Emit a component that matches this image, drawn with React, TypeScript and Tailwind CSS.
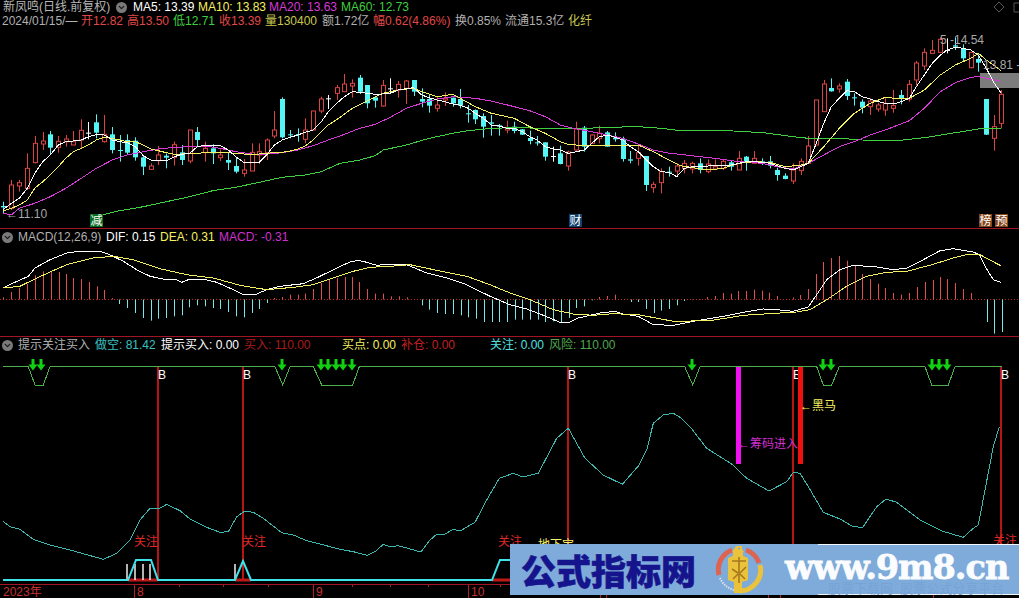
import { ChevronDown } from 'lucide-react'

type Zoom = number[][]

// chart points were read off 3x crops, so every list carries its crop offset
function pts(list: Zoom, ox: number, oy: number): string {
  return list.map(([x, y]) => `${(ox + x / 3).toFixed(1)},${(oy + y / 3).toFixed(1)}`).join(' ')
}

const RED = '#dc4444'
const CYAN = '#55f5f5'

// x, wick top, body top, body bottom, wick bottom, colour
type Candle = [number, number, number, number, number, string]

const CANDLES_A: Candle[] = [
  [10, 605, 618, 622, 640, 'c'], [34, 540, 555, 625, 630, 'r'], [58, 540, 548, 558, 575, 'r'], [82, 460, 505, 565, 570, 'r'],
  [104, 408, 430, 488, 490, 'r'], [128, 396, 423, 432, 450, 'r'], [151, 393, 403, 443, 465, 'c'], [175, 408, 424, 442, 458, 'r'],
  [197, 405, 417, 425, 440, 'r'], [220, 393, 425, 435, 435, 'r'], [244, 358, 391, 420, 447, 'r'], [265, 366, 398, 400, 418, 'w'],
  [289, 343, 367, 398, 415, 'c'], [313, 345, 403, 425, 428, 'r'], [337, 381, 403, 450, 460, 'c'], [359, 405, 450, 452, 485, 'c'],
  [382, 403, 420, 458, 465, 'c'], [406, 412, 422, 472, 482, 'c'], [430, 465, 472, 500, 525, 'c'], [452, 490, 498, 508, 510, 'r'],
  [475, 438, 465, 482, 495, 'r'], [499, 460, 467, 473, 505, 'c'], [523, 425, 434, 472, 497, 'r'], [545, 435, 457, 480, 495, 'c'],
  [569, 390, 390, 483, 490, 'r'], [592, 381, 396, 420, 438, 'c'], [616, 425, 445, 458, 485, 'r'], [638, 433, 445, 460, 492, 'c'],
  [661, 448, 465, 473, 483, 'r'], [685, 458, 480, 488, 510, 'c'], [707, 472, 498, 515, 520, 'c'], [731, 477, 510, 520, 530, 'r'],
  [755, 430, 457, 513, 513, 'r'], [778, 430, 455, 465, 492, 'r'], [800, 415, 420, 458, 480, 'r'], [823, 333, 390, 408, 415, 'r'],
  [847, 292, 297, 412, 415, 'c'], [871, 390, 403, 405, 415, 'c'], [893, 385, 402, 404, 425, 'c'], [916, 355, 390, 418, 430, 'r'],
  [940, 332, 333, 390, 390, 'r'], [964, 290, 297, 333, 340, 'r'], [985, 285, 295, 297, 327, 'w'], [1010, 255, 263, 280, 300, 'r'],
]

const CANDLES_B: Candle[] = [
  [13, 222, 252, 275, 275, 'r'], [37, 238, 250, 258, 293, 'r'], [59, 225, 233, 275, 282, 'c'], [82, 255, 255, 310, 325, 'c'],
  [106, 292, 292, 302, 323, 'c'], [128, 240, 256, 318, 320, 'r'], [151, 235, 265, 267, 280, 'w'], [175, 243, 253, 270, 293, 'r'],
  [199, 240, 243, 265, 312, 'r'], [221, 240, 240, 275, 288, 'c'], [245, 265, 297, 305, 322, 'c'], [268, 283, 297, 317, 338, 'c'],
  [292, 290, 315, 325, 335, 'r'], [315, 277, 295, 300, 318, 'r'], [338, 293, 293, 310, 320, 'c'], [361, 267, 297, 317, 325, 'c'],
  [385, 315, 340, 342, 368, 'c'], [406, 328, 330, 358, 372, 'c'], [430, 340, 348, 380, 413, 'c'], [454, 345, 367, 371, 407, 'c'],
  [478, 372, 376, 380, 407, 'c'], [500, 362, 385, 390, 400, 'r'], [523, 365, 380, 393, 400, 'c'], [547, 387, 388, 404, 405, 'c'],
  [569, 392, 414, 423, 433, 'c'], [591, 408, 427, 429, 437, 'c'], [616, 427, 427, 470, 482, 'c'], [640, 440, 468, 470, 485, 'w'],
  [661, 437, 460, 492, 493, 'c'], [685, 452, 456, 498, 512, 'r'], [709, 365, 387, 450, 452, 'r'], [733, 378, 383, 440, 455, 'c'],
  [755, 403, 405, 430, 432, 'r'], [778, 377, 400, 416, 430, 'r'], [802, 393, 397, 440, 440, 'c'], [826, 397, 413, 418, 425, 'c'],
  [848, 410, 418, 477, 485, 'c'], [871, 453, 478, 482, 490, 'c'], [895, 433, 458, 475, 497, 'r'], [919, 468, 468, 555, 573, 'c'],
  [940, 545, 553, 563, 578, 'r'], [964, 505, 515, 548, 580, 'r'], [987, 500, 515, 518, 530, 'c'], [1010, 490, 498, 513, 525, 'r'],
]

const CANDLES_C: Candle[] = [
  [13, 480, 490, 505, 520, 'r'], [37, 485, 490, 507, 520, 'r'], [61, 475, 490, 510, 520, 'c'], [83, 478, 492, 515, 520, 'r'],
  [106, 478, 500, 507, 510, 'r'], [130, 480, 484, 505, 510, 'r'], [154, 480, 487, 500, 512, 'c'], [176, 453, 475, 510, 510, 'r'],
  [199, 468, 470, 485, 512, 'c'], [223, 453, 475, 490, 490, 'r'], [247, 475, 484, 490, 495, 'c'], [269, 468, 484, 497, 505, 'c'],
  [292, 503, 510, 525, 542, 'c'], [316, 520, 527, 537, 538, 'c'], [340, 490, 510, 543, 552, 'r'], [362, 475, 484, 512, 525, 'r'],
  [385, 408, 438, 490, 490, 'r'], [409, 300, 300, 435, 435, 'r'], [431, 240, 252, 335, 335, 'r'], [454, 235, 264, 274, 275, 'c'],
  [478, 250, 258, 267, 278, 'r'], [501, 237, 245, 288, 300, 'c'], [523, 280, 292, 294, 317, 'c'], [547, 298, 305, 323, 340, 'c'],
  [571, 295, 303, 320, 345, 'r'], [595, 308, 315, 327, 335, 'r'], [616, 295, 310, 330, 347, 'r'], [640, 270, 317, 325, 338, 'r'],
  [664, 270, 285, 295, 313, 'c'], [688, 240, 253, 297, 305, 'r'], [709, 183, 189, 240, 257, 'r'], [733, 145, 157, 198, 210, 'r'],
  [757, 120, 151, 160, 160, 'r'], [781, 112, 118, 157, 157, 'r'], [802, 115, 150, 152, 160, 'w'], [826, 112, 136, 140, 150, 'c'],
  [850, 133, 145, 175, 183, 'c'], [872, 157, 157, 203, 205, 'r'], [895, 163, 177, 188, 215, 'c'], [919, 297, 297, 404, 405, 'c'],
  [943, 345, 380, 415, 452, 'r'], [964, 270, 283, 370, 385, 'r'],
]

const MA5 = [
  pts([[10, 628], [34, 610], [58, 595], [82, 565], [104, 520], [128, 485], [151, 465], [175, 435], [197, 425], [220, 423], [244, 420], [265, 410], [289, 404], [313, 405], [337, 420], [359, 425], [382, 428], [406, 440], [430, 467], [452, 480], [475, 483], [499, 482], [523, 470], [545, 463], [569, 460], [592, 440], [616, 435], [638, 435], [661, 437], [685, 450], [707, 470], [731, 487], [755, 488], [778, 487], [800, 465], [823, 435], [847, 420], [871, 412], [893, 405], [916, 397], [940, 390], [964, 365], [985, 335], [1010, 310]], 0, 0),
  pts([[13, 290], [37, 275], [59, 277], [82, 280], [106, 283], [128, 282], [151, 280], [175, 270], [199, 266], [221, 263], [245, 285], [268, 293], [292, 300], [315, 305], [338, 312], [361, 316], [385, 325], [406, 340], [430, 355], [454, 375], [478, 378], [500, 385], [523, 385], [547, 395], [569, 410], [591, 420], [616, 440], [640, 447], [661, 450], [685, 460], [709, 455], [733, 450], [755, 430], [778, 410], [802, 405], [826, 412], [848, 420], [871, 440], [895, 455], [919, 480], [940, 500], [964, 515], [987, 517], [1010, 530]], 340, 0),
  pts([[13, 505], [37, 500], [61, 498], [83, 498], [106, 497], [130, 497], [154, 495], [176, 490], [199, 485], [223, 485], [247, 487], [269, 490], [292, 497], [316, 505], [340, 510], [362, 500], [385, 490], [409, 430], [431, 370], [454, 320], [478, 295], [501, 272], [523, 275], [547, 290], [571, 297], [595, 305], [616, 310], [640, 312], [664, 305], [688, 295], [709, 260], [733, 225], [757, 190], [781, 165], [802, 150], [826, 142], [850, 145], [872, 150], [895, 165], [919, 205], [943, 250], [964, 280]], 680, 0),
].join(' ')

const MA10 = [
  pts([[10, 632], [34, 625], [58, 615], [82, 600], [104, 565], [128, 545], [151, 525], [175, 500], [197, 475], [220, 455], [244, 445], [265, 435], [289, 420], [313, 412], [337, 415], [359, 420], [382, 425], [406, 425], [430, 435], [452, 447], [475, 452], [499, 458], [523, 463], [545, 462], [569, 460], [592, 460], [616, 458], [638, 457], [661, 456], [685, 458], [707, 460], [731, 462], [755, 462], [778, 462], [800, 460], [823, 458], [847, 457], [871, 453], [893, 447], [916, 438], [940, 420], [964, 395], [985, 375], [1019, 353]], 0, 0),
  pts([[37, 325], [82, 303], [128, 280], [175, 270], [221, 265], [245, 275], [292, 290], [338, 283], [361, 295], [406, 320], [454, 340], [523, 355], [569, 380], [616, 400], [661, 425], [685, 433], [733, 437], [778, 435], [848, 435], [895, 435], [940, 455], [987, 480]], 340, 0),
  pts([[0, 497], [40, 503], [83, 510], [130, 505], [176, 490], [223, 485], [269, 487], [316, 500], [362, 495], [385, 490], [431, 440], [478, 385], [523, 340], [571, 310], [616, 292], [664, 297], [688, 295], [733, 270], [781, 225], [826, 195], [872, 175], [895, 160], [919, 180], [964, 212]], 680, 0),
].join(' ')

const MA20 = [
  pts([[10, 640], [34, 645], [58, 625], [104, 610], [151, 590], [197, 565], [244, 535], [289, 505], [337, 480], [382, 465], [430, 455], [475, 447], [523, 442], [569, 440], [616, 438], [661, 445], [707, 455], [755, 462], [800, 462], [847, 458], [893, 450], [940, 437], [985, 420]], 0, 0),
  pts([[0, 408], [59, 385], [106, 373], [151, 352], [199, 325], [245, 310], [292, 297], [338, 290], [406, 295], [454, 303], [523, 320], [569, 332], [616, 350], [661, 375], [700, 385], [755, 395], [802, 405], [848, 415], [895, 432], [940, 450], [987, 460]], 340, 0),
  pts([[0, 463], [60, 470], [106, 475], [154, 482], [199, 487], [247, 490], [292, 500], [340, 507], [385, 490], [431, 465], [478, 440], [523, 425], [571, 405], [616, 390], [688, 362], [733, 325], [781, 275], [826, 248], [872, 232], [895, 230], [919, 235], [960, 243]], 680, 0),
].join(' ')

const MA60 = [
  pts([[305, 645], [359, 632], [430, 620], [499, 605], [569, 590], [638, 572], [707, 562], [778, 547], [847, 532], [916, 525], [964, 515]], 0, 0),
  pts([[0, 490], [59, 480], [106, 467], [130, 450], [199, 435], [268, 415], [338, 400], [385, 392], [454, 385], [523, 383], [616, 385], [700, 387], [802, 382], [895, 380], [964, 385]], 340, 0),
  pts([[0, 392], [80, 392], [160, 393], [250, 398], [340, 410], [385, 415], [478, 415], [547, 420], [640, 423], [733, 413], [826, 398], [895, 387], [964, 384]], 680, 0),
].join(' ')

const MACD_BARS: [number, number][] = [
  [10, 208], [34, 192], [57, 180], [81, 168], [104, 142], [128, 130], [152, 132], [176, 132], [197, 138], [220, 150], [244, 153], [266, 162], [290, 175], [313, 186], [337, 210],
  [358, 228], [382, 240], [406, 255], [430, 270], [452, 278], [475, 272], [499, 270], [523, 265], [545, 262], [568, 238], [592, 232], [616, 235], [638, 240], [661, 243], [685, 252], [707, 265], [731, 268], [755, 255], [778, 243], [800, 225],
  [823, 210], [847, 207], [871, 200], [893, 200], [916, 197], [940, 183], [964, 165], [986, 155], [1010, 150], [1034, 147], [1057, 147], [1078, 162], [1102, 183], [1125, 197], [1148, 197], [1172, 205], [1196, 205], [1220, 208],
  [1265, 232], [1288, 245], [1312, 255], [1335, 258], [1358, 258], [1382, 262], [1405, 268], [1428, 272], [1451, 282], [1475, 282], [1498, 282], [1522, 282],
  [1544, 275], [1567, 275], [1589, 275], [1613, 275], [1636, 282], [1660, 280], [1682, 285], [1706, 270], [1729, 240], [1753, 235], [1775, 217],
  [1798, 207], [1822, 204], [1846, 200],
  [1892, 222], [1915, 222], [1939, 243], [1961, 255], [1984, 248], [2008, 243], [2030, 232], [2053, 219],
  [2077, 213], [2101, 213], [2122, 207], [2146, 204], [2170, 195], [2194, 197], [2215, 189], [2239, 189], [2263, 185], [2287, 188], [2308, 194], [2332, 204], [2380, 208], [2401, 201], [2425, 183], [2449, 138], [2470, 102], [2494, 90], [2518, 84], [2542, 98], [2564, 113], [2587, 138], [2611, 153], [2635, 167], [2655, 180], [2680, 195], [2704, 200], [2728, 195], [2750, 177], [2774, 162], [2798, 156], [2821, 147], [2842, 153], [2866, 165], [2890, 183], [2912, 195],
  [2960, 282], [2983, 317], [3005, 312],
]

const DIF = [
  pts([[10, 180], [40, 165], [85, 145], [105, 120], [150, 95], [200, 75], [240, 70], [300, 70], [325, 78], [370, 100], [410, 125], [450, 145], [500, 155], [525, 153], [545, 163], [570, 153], [610, 153], [650, 163], [700, 185], [730, 200], [770, 198], [800, 185], [840, 175], [910, 167], [960, 145], [1010, 120], [1050, 102], [1075, 97], [1100, 103], [1130, 112], [1170, 108], [1220, 110], [1280, 135], [1340, 150], [1400, 170], [1470, 205]], 0, 228),
  pts([[0, 230], [50, 243], [100, 262], [150, 283], [175, 284], [205, 270], [270, 255], [315, 250], [340, 258], [385, 265], [430, 290], [490, 292], [550, 280], [640, 265], [700, 253], [760, 243], [800, 245], [850, 250], [895, 237], [920, 200], [950, 155], [990, 125], [1030, 112], [1100, 117], [1150, 125], [1190, 120], [1240, 95], [1290, 68], [1330, 62], [1390, 72], [1408, 80], [1425, 115], [1450, 155], [1472, 163]], 510, 228),
].join(' ')

const DEA = [
  pts([[10, 180], [60, 175], [100, 155], [150, 132], [200, 110], [280, 90], [340, 85], [400, 95], [480, 122], [560, 140], [640, 150], [720, 172], [800, 185], [880, 178], [940, 170], [1000, 150], [1060, 130], [1110, 118], [1170, 115], [1230, 110], [1310, 127], [1400, 145], [1470, 170]], 0, 228),
  pts([[0, 195], [60, 215], [130, 245], [190, 258], [250, 262], [310, 257], [385, 260], [490, 280], [600, 278], [700, 262], [860, 252], [900, 245], [950, 215], [1010, 175], [1070, 145], [1130, 133], [1190, 130], [1260, 112], [1330, 90], [1370, 80], [1410, 80], [1472, 113]], 510, 228),
].join(' ')

const SHORT_LINE = [
  pts([[10, 545], [30, 560], [60, 568], [100, 598], [150, 615], [210, 630], [310, 658], [350, 640], [390, 600], [420, 540], [450, 505], [475, 507], [500, 493], [540, 512], [570, 537], [620, 562], [660, 577], [685, 575], [710, 530], [735, 513], [760, 517], [790, 535], [845, 578], [880, 585], [920, 602], [960, 612]], 0, 340),
  pts([[0, 628], [40, 635], [82, 646], [105, 635], [130, 613], [150, 620], [175, 617], [243, 636], [270, 600], [290, 583], [315, 582], [340, 568], [360, 573], [405, 547], [440, 480], [478, 415], [520, 400], [548, 411], [595, 400], [650, 295], [685, 265], [735, 355], [790, 405], [847, 433], [895, 378], [920, 330], [940, 250], [970, 225], [1000, 220]], 340, 340),
  pts([[0, 232], [30, 260], [80, 325], [155, 372], [200, 415], [267, 453], [320, 425], [340, 397], [360, 400], [385, 440], [430, 517], [480, 537], [520, 560], [548, 562], [590, 500], [618, 477], [650, 487], [720, 540], [785, 573], [850, 592], [880, 565], [895, 555], [940, 320], [958, 260]], 680, 340),
].join(' ')

const FUNNEL = [
  pts([[10, 80], [85, 80], [105, 135], [130, 135], [150, 80], [825, 80], [848, 135], [870, 80], [940, 80], [965, 135]], 0, 340),
  pts([[38, 135], [58, 80]], 340, 340),
  pts([[14, 80], [38, 135], [60, 80], [410, 80], [430, 135], [455, 135], [478, 80], [735, 80], [755, 135], [805, 135], [825, 80], [965, 80]], 680, 340),
].join(' ')

const ARROWS = [33, 41, 282, 321, 328, 336, 343, 352, 692, 823, 831, 932, 939, 947]
const BUY_LINES = [158, 243, 568, 793, 1001]
const B_LABELS = [158, 243, 568, 793, 1001]
const MINOR_TICKS = [179, 223, 268, 352, 390, 428, 500, 640, 680, 720, 820, 860, 900, 980]

function CandleMark({ c, ox }: { c: Candle; ox: number }) {
  const [zx, top, bodyTop, bodyBottom, bottom, kind] = c
  const x = Math.round(ox + zx / 3) + 0.5
  const color = kind === 'r' ? RED : kind === 'w' ? '#ffffff' : CYAN
  const [wt, bt, bb, wb] = [top, bodyTop, bodyBottom, bottom].map((v) => v / 3)
  return (
    <g>
      <line x1={x} x2={x} y1={wt} y2={wb} stroke={color} strokeWidth={1} />
      {kind === 'r' ? (
        <rect x={x - 2} y={bt} width={4} height={Math.max(bb - bt, 1)} fill="#000" stroke={color} strokeWidth={1} />
      ) : (
        <rect x={x - 2.5} y={bt} width={5} height={Math.max(bb - bt, 1)} fill={color} />
      )}
    </g>
  )
}

function Badge({ x, y, bg, text }: { x: number; y: number; bg: string; text: string }) {
  return (
    <g>
      <rect x={x} y={y} width={13} height={13} fill={bg} />
      <text x={x + 0.5} y={y + 11} fontSize={12} fill="#fff">{text}</text>
    </g>
  )
}

function DownArrow({ x }: { x: number }) {
  return (
    <path d={`M${x - 1.5} 359 h3 v5.5 h3 l-4.5 6 l-4.5 -6 h3 z`} fill="#12d012" />
  )
}

function Toggle() {
  return (
    <span className="flex h-[11px] w-[11px] shrink-0 items-center justify-center rounded-full bg-[#7a7a7a]">
      <ChevronDown size={9} strokeWidth={3.5} color="#1a1a1a" />
    </span>
  )
}

function PriceChart() {
  return (
    <svg className="block h-[200px] w-[1019px]" viewBox="0 28 1019 200">
      <rect x={980} y={73} width={39} height={15} fill="#7c7c7c" />
      {CANDLES_A.map((c) => <CandleMark key={`a${c[0]}`} c={c} ox={0} />)}
      {CANDLES_B.map((c) => <CandleMark key={`b${c[0]}`} c={c} ox={340} />)}
      {CANDLES_C.map((c) => <CandleMark key={`c${c[0]}`} c={c} ox={680} />)}
      <polyline points={MA60} fill="none" stroke="#3fd03f" strokeWidth={1} shapeRendering="crispEdges" />
      <polyline points={MA20} fill="none" stroke="#d838d8" strokeWidth={1} shapeRendering="crispEdges" />
      <polyline points={MA10} fill="none" stroke="#f4f060" strokeWidth={1} shapeRendering="crispEdges" />
      <polyline points={MA5} fill="none" stroke="#ffffff" strokeWidth={1} shapeRendering="crispEdges" />
      <text x={6} y={218} fontSize={12} fill="#a8a8a8">←11.10</text>
      <text x={940} y={44} fontSize={12} fill="#a8a8a8">5 -14.54</text>
      <text x={983} y={69} fontSize={12} fill="#a8a8a8">13.81 -</text>
      <Badge x={90} y={214} bg="#0b6a22" text="减" />
      <Badge x={569} y={214} bg="#10406e" text="财" />
      <Badge x={979} y={214} bg="#84461c" text="榜" />
      <Badge x={995} y={214} bg="#84461c" text="预" />
    </svg>
  )
}

function MacdChart() {
  return (
    <svg className="block h-[91px] w-[1019px]" viewBox="0 245 1019 91">
      <line x1={0} x2={1019} y1={299.5} y2={299.5} stroke="#c02828" strokeWidth={1} strokeDasharray="1 2" />
      {MACD_BARS.map(([zx, top]) => {
        const x = Math.round(zx / 3) + 0.5
        const y = 228 + top / 3
        return <line key={zx} x1={x} x2={x} y1={299.5} y2={y} stroke={top < 214 ? '#e05050' : '#78e6e6'} strokeWidth={1} />
      })}
      <polyline points={DIF} fill="none" stroke="#ffffff" strokeWidth={1} shapeRendering="crispEdges" />
      <polyline points={DEA} fill="none" stroke="#f4f060" strokeWidth={1} shapeRendering="crispEdges" />
    </svg>
  )
}

function SignalChart() {
  return (
    <svg className="block h-[230px] w-[1019px]" viewBox="0 354 1019 230">
      <polyline points={FUNNEL} fill="none" stroke="#4cb04c" strokeWidth={1} shapeRendering="crispEdges" />
      {ARROWS.map((x) => <DownArrow key={x} x={x} />)}
      {BUY_LINES.map((x) => (
        <line key={x} x1={x} x2={x} y1={367} y2={581} stroke="#b81414" strokeWidth={2} />
      ))}
      {B_LABELS.map((x) => (
        <text key={x} x={x} y={379} fontSize={12} fill="#fff">B</text>
      ))}
      <rect x={736} y={367} width={5} height={97} fill="#f010f0" />
      <rect x={798} y={367} width={5} height={97} fill="#f01010" />
      <text x={738} y={448} fontSize={12} fill="#d030d0">←筹码进入</text>
      <text x={800} y={410} fontSize={12} fill="#f4f060">←黑马</text>
      <polyline points={SHORT_LINE} fill="none" stroke="#3cb8b0" strokeWidth={1} shapeRendering="crispEdges" />
      <text x={134} y={546} fontSize={12} fill="#e02828">关注</text>
      <text x={242} y={546} fontSize={12} fill="#e02828">关注</text>
      <text x={498} y={546} fontSize={12} fill="#e02828">关注</text>
      <text x={993} y={545} fontSize={12} fill="#e02828">关注</text>
      <text x={538} y={549} fontSize={12} fill="#f4f060">地下宝</text>
      <path d="M128 580 h30 M235 580 h16 M492 580 h30" stroke="#c01818" strokeWidth={3} fill="none" />
      <path d="M127 564 v16 M135 564 v16 M143 564 v16 M150 564 v16 M235 564 v16" stroke="#fff" strokeWidth={1.4} fill="none" />
      <polyline
        points="3,580 128,580 136,560 151,560 158,580 235,580 243,561 251,580 492,580 500,560 530,560"
        fill="none"
        stroke="#3ee4ea"
        strokeWidth={2}
      />
    </svg>
  )
}

function TimeAxis() {
  return (
    <svg className="block h-[13px] w-[1019px]" viewBox="0 585 1019 13">
      {MINOR_TICKS.map((x) => (
        <line key={x} x1={x + 0.5} x2={x + 0.5} y1={585} y2={587} stroke="#b02020" />
      ))}
      {[134, 313, 468, 600, 606, 768, 780, 933].map((x) => (
        <line key={x} x1={x + 0.5} x2={x + 0.5} y1={585} y2={598} stroke="#b02020" />
      ))}
      <text x={3} y={596} fontSize={12} fill="#c83030">2023年</text>
      <text x={137} y={596} fontSize={12} fill="#c83030">8</text>
      <text x={316} y={596} fontSize={12} fill="#c83030">9</text>
      <text x={471} y={596} fontSize={12} fill="#c83030">10</text>
    </svg>
  )
}

function CoinLogo() {
  return (
    <svg className="h-[50px] w-[50px] shrink-0" viewBox="0 0 50 50">
      <path d="M5 30 A21 21 0 0 1 18 5" fill="none" stroke="#dc6450" strokeWidth={5} />
      <path d="M32 5 A21 21 0 0 1 45 18" fill="none" stroke="#dc6450" strokeWidth={5} />
      <path d="M46 20 A21 21 0 0 1 26 46" fill="none" stroke="#eac23c" strokeWidth={5} />
      <path d="M6 33 A21 21 0 0 0 20 45" fill="none" stroke="#d8dfe8" strokeWidth={2} strokeDasharray="1.5 1" />
      <path d="M22 1 h6 v3 l2 3 h-1 v4 l5 2 v22 l-6 2 v11 h-8 v-11 l-6 -2 v-22 l5 -2 v-4 h-1 l2 -3 z" fill="#eac23c" />
      <path d="M18 16 h14 M25 12 v26 M18 24 l6 4 M32 22 l-6 6 M19 34 l5 -5 M31 34 l-5 -5" stroke="#a8781c" strokeWidth={1.6} fill="none" />
      <circle cx={25} cy={3.5} r={1} fill="#7eabda" />
    </svg>
  )
}

function Watermark() {
  return (
    <div className="absolute left-[510px] top-[544px] flex h-[51px] w-[509px] items-center bg-[#7eabda]">
      <div className="absolute left-[308px] top-0 h-[51px] w-[201px] border-y border-white/90" />
      <div className="absolute left-[318px] top-[38px] text-[13px] leading-[13px] whitespace-nowrap text-[#76a3d5]">股票下载网&nbsp;&nbsp;股票公式分享平台</div>
      <div className="relative ml-[11px] w-[176px] text-[35px] leading-[51px] font-black whitespace-nowrap text-[#16148c] [-webkit-text-stroke:0.6px_#16148c] [font-family:'Noto_Sans_CJK_SC',sans-serif]">公式指标网</div>
      <div className="relative ml-[17px]">
        <CoinLogo />
      </div>
      <div className="relative ml-[21px] mb-[4px] w-[228px] text-[33.5px] leading-[40px] font-bold tracking-[-1px] whitespace-nowrap text-[#fbfcfe] [-webkit-text-stroke:0.8px_#fbfcfe] [font-family:'DejaVu_Serif',serif]">www.9m8.cn</div>
    </div>
  )
}

export default function App() {
  return (
    <div className="relative flex h-[598px] w-[1019px] flex-col overflow-hidden bg-black text-[12px] leading-[13px] [font-family:'Liberation_Sans','Noto_Sans_CJK_SC',sans-serif]">
      {/* price panel */}
      <div className="h-[229px] shrink-0 border-b border-[#a01424]">
        <div className="flex h-[28px] flex-col whitespace-nowrap">
          <div className="flex h-[14px] items-center pl-[3px]">
            <span className="w-[113px] text-[#b8b8b8]">新凤鸣(日线.前复权)</span>
            <Toggle />
            <span className="ml-[6px] w-[65px] text-white">MA5: 13.39</span>
            <span className="w-[71px] text-[#f4f060]">MA10: 13.83</span>
            <span className="w-[72px] text-[#d838d8]">MA20: 13.63</span>
            <span className="text-[#3fd03f]">MA60: 12.73</span>
            <svg className="ml-auto shrink-0" width="26" height="14" viewBox="0 0 26 14">
              <path d="M6 2 l5 5 l-5 5 l-5 -5 z M21 3 h6 v9 h-6 z" fill="none" stroke="#555" />
            </svg>
          </div>
          <div className="flex h-[14px] items-center pl-[2px]">
            <span className="w-[79px] text-[#b0b0b0]">2024/01/15/—</span>
            <span className="w-[46px] text-[#e04848]">开12.82</span>
            <span className="w-[46px] text-[#e04848]">高13.50</span>
            <span className="w-[46px] text-[#3fd03f]">低12.71</span>
            <span className="w-[46px] text-[#e04848]">收13.39</span>
            <span className="w-[57px] text-[#c8c850]">量130400</span>
            <span className="w-[51px] text-[#b0b0b0]">额1.72亿</span>
            <span className="w-[82px] text-[#e04848]">幅0.62(4.86%)</span>
            <span className="w-[50px] text-[#b0b0b0]">换0.85%</span>
            <span className="w-[63px] text-[#b0b0b0]">流通15.3亿</span>
            <span className="text-[#c8c850]">化纤</span>
          </div>
        </div>
        <PriceChart />
      </div>

      {/* MACD panel */}
      <div className="h-[108px] shrink-0 border-b border-[#a01424]">
        <div className="flex h-[16px] items-center pl-[2px] whitespace-nowrap">
          <Toggle />
          <span className="ml-[5px] w-[88px] text-[#b0b0b0]">MACD(12,26,9)</span>
          <span className="w-[54px] text-white">DIF: 0.15</span>
          <span className="w-[59px] text-[#f4f060]">DEA: 0.31</span>
          <span className="text-[#d030d0]">MACD: -0.31</span>
        </div>
        <MacdChart />
      </div>

      {/* signal panel */}
      <div className="h-[248px] shrink-0 border-b border-[#a01424]">
        <div className="flex h-[17px] items-center pl-[2px] whitespace-nowrap">
          <Toggle />
          <span className="ml-[5px] w-[77px] text-[#b0b0b0]">提示关注买入</span>
          <span className="w-[66px] text-[#38c0c0]">做空: 81.42</span>
          <span className="w-[83px] text-white">提示买入: 0.00</span>
          <span className="w-[98px] text-[#a81c1c]">买入: 110.00</span>
          <span className="w-[59px] text-[#f4f060]">买点: 0.00</span>
          <span className="w-[89px] text-[#c02020]">补仓: 0.00</span>
          <span className="w-[59px] text-[#50e0e0]">关注: 0.00</span>
          <span className="text-[#50a850]">风险: 110.00</span>
        </div>
        <SignalChart />
      </div>

      <TimeAxis />
      <Watermark />
    </div>
  )
}
